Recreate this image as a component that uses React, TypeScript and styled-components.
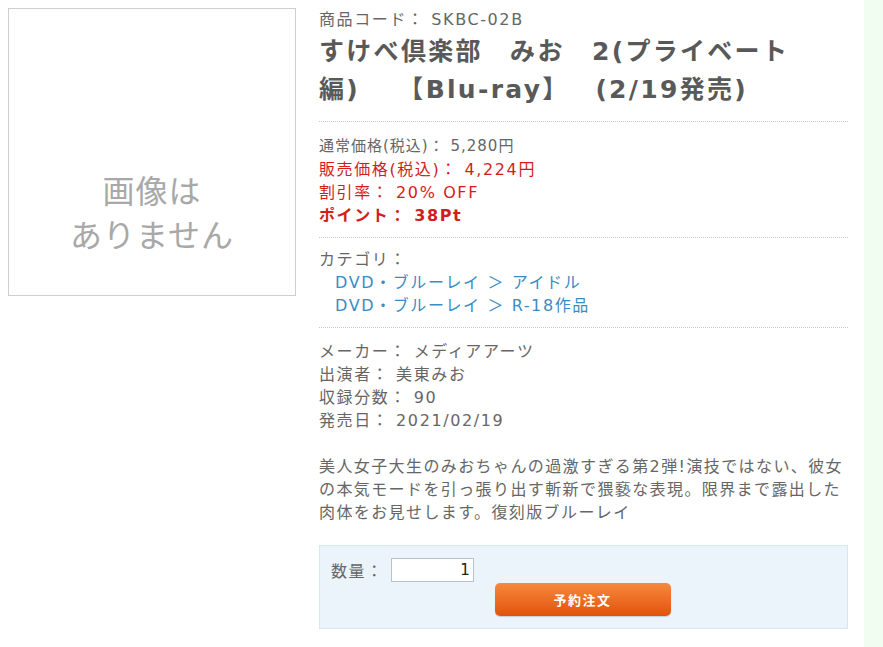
import React from "react";
import styled, { createGlobalStyle } from "styled-components";

const Global = createGlobalStyle`
  html, body { margin: 0; padding: 0; background: #fff; }
  body { font-family: "DejaVu Sans", "Noto Sans CJK JP", sans-serif; color: #666; }
`;

const Page = styled.div`
  display: flex;
  width: 883px;
  min-height: 647px;
`;

const ImageCol = styled.div`
  padding: 8px 0 0 8px;
  flex: none;
`;

const NoImage = styled.div`
  box-sizing: border-box;
  width: 288px;
  height: 288px;
  border: 1px solid #cfcfcf;
  padding-top: 158px;
  text-align: center;
  font-family: "Noto Sans CJK JP", sans-serif;
  font-size: 32px;
  line-height: 44px;
  color: #a8a8a8;
  letter-spacing: 1px;
`;

const Main = styled.div`
  width: 529px;
  margin-left: 23px;
  flex: none;
`;

const Side = styled.div`
  margin-left: auto;
  width: 19px;
  background: #f2fdf2;
  flex: none;
`;

const Code = styled.div`
  margin-top: 10px;
  font-size: 16px;
  line-height: 20px;
  letter-spacing: 1.6px;
  color: #666;
`;

const Title = styled.h1`
  width: 485px;
  margin: 3px 0 12px;
  font-size: 25px;
  line-height: 38px;
  font-weight: bold;
  color: #595959;
  letter-spacing: 2.3px;
`;

const Section = styled.div<{ $pt: number; $pb: number }>`
  padding: ${(p) => p.$pt}px 0 ${(p) => p.$pb}px;
  border-top: 1px dotted #c8c8c8;
`;

const Line = styled.div<{
  $tone?: "red" | "point" | "link";
  $indent?: boolean;
  $small?: boolean;
}>`
  font-size: ${(p) => (p.$small ? "15px" : "16px")};
  line-height: 23px;
  letter-spacing: ${(p) => (p.$small ? "1px" : "1.6px")};
  padding-left: ${(p) => (p.$indent ? "16px" : "0")};
  color: ${(p) =>
    p.$tone === "red" || p.$tone === "point"
      ? "#d41c1c"
      : p.$tone === "link"
      ? "#3a8cc3"
      : "#666"};
  font-weight: ${(p) => (p.$tone === "point" ? "bold" : "normal")};
`;

const Description = styled.p`
  margin: 23px 0 21px;
  font-size: 16px;
  line-height: 23px;
  letter-spacing: 1.4px;
  color: #666;
`;

const OrderBox = styled.div`
  box-sizing: border-box;
  height: 84px;
  border: 1px solid #d6e7f3;
  background: #ebf4fb;
  padding: 12px 0 0 11px;
`;

const QtyRow = styled.div`
  display: flex;
  align-items: center;
  gap: 7px;
`;

const QtyLabel = styled.span`
  font-size: 16px;
  letter-spacing: 1.6px;
  color: #666;
`;

const QtyInput = styled.input`
  box-sizing: border-box;
  width: 83px;
  height: 24px;
  border: 1px solid #b9c2ca;
  background: #fff;
  text-align: right;
  font-family: "DejaVu Sans", sans-serif;
  font-size: 15px;
  color: #222;
  padding: 0 3px;
`;

const ButtonRow = styled.div`
  display: flex;
  justify-content: center;
  margin-top: 1px;
  padding-right: 13px;
`;

const OrderButton = styled.button`
  width: 176px;
  height: 33px;
  border: none;
  border-radius: 5px;
  background: linear-gradient(#f7893d, #e1530c);
  color: #fff;
  font-family: "Noto Sans CJK JP", sans-serif;
  font-weight: bold;
  font-size: 13px;
  letter-spacing: 1.5px;
  box-shadow: 0 1px 1px rgba(0, 0, 0, 0.15);
`;

export default function App() {
  return (
    <>
      <Global />
      <Page>
        <ImageCol>
          <NoImage>
            画像は
            <br />
            ありません
          </NoImage>
        </ImageCol>
        <Main>
          <Code>商品コード： SKBC-02B</Code>
          <Title>
            すけべ倶楽部　みお　2(プライベート編)　{"\u00a0"}【Blu-ray】　{"\u00a0"}(2/19発売)
          </Title>
          <Section $pt={13} $pb={10}>
            <Line $small>通常価格(税込)： 5,280円</Line>
            <Line $tone="red">販売価格(税込)： 4,224円</Line>
            <Line $tone="red">割引率： 20% OFF</Line>
            <Line $tone="point">ポイント： 38Pt</Line>
          </Section>
          <Section $pt={10} $pb={10}>
            <Line>カテゴリ：</Line>
            <Line $tone="link" $indent>
              DVD・ブルーレイ ＞ アイドル
            </Line>
            <Line $tone="link" $indent>
              DVD・ブルーレイ ＞ R-18作品
            </Line>
          </Section>
          <Section $pt={12} $pb={0}>
            <Line>メーカー： メディアアーツ</Line>
            <Line>出演者： 美東みお</Line>
            <Line>収録分数： 90</Line>
            <Line>発売日： 2021/02/19</Line>
          </Section>
          <Description>
            美人女子大生のみおちゃんの過激すぎる第2弾!演技ではない、彼女の本気モードを引っ張り出す斬新で猥褻な表現。限界まで露出した肉体をお見せします。復刻版ブルーレイ
          </Description>
          <OrderBox>
            <QtyRow>
              <QtyLabel>数量：</QtyLabel>
              <QtyInput defaultValue="1" />
            </QtyRow>
            <ButtonRow>
              <OrderButton>予約注文</OrderButton>
            </ButtonRow>
          </OrderBox>
        </Main>
        <Side />
      </Page>
    </>
  );
}
